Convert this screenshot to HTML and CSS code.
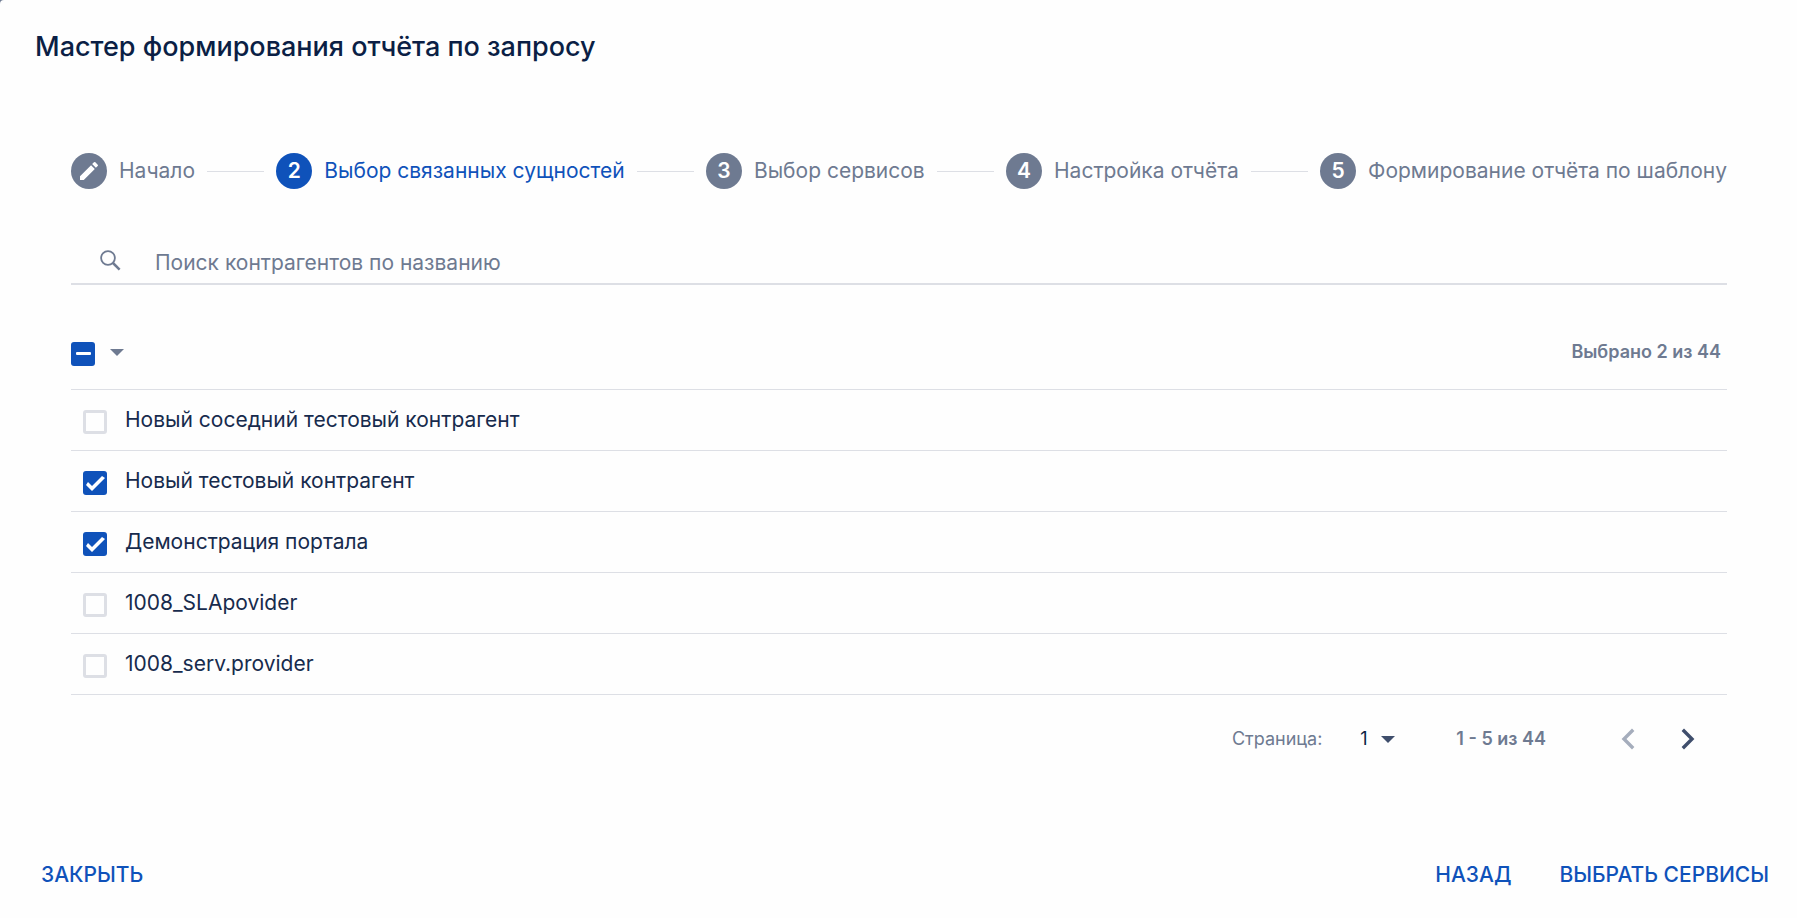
FILE: index.html
```html
<!DOCTYPE html>
<html lang="ru">
<head>
<meta charset="UTF-8">
<meta name="viewport" content="width=device-width, initial-scale=1.0">
<title>Мастер формирования отчёта по запросу</title>
<link rel="stylesheet" href="styles.css">
</head>
<body>

<div class="dialog">
    <h2 class="dialog-title">Мастер формирования отчёта по запросу</h2>

    <div class="dialog-content">
        <ol class="stepper">
            <li class="step">
                <span class="step-icon">
                    <svg viewBox="0 0 24 24" width="24" height="24" fill="currentColor"><path d="M3 17.25V21h3.75L17.81 9.94l-3.75-3.75L3 17.25zM20.71 7.04a1 1 0 0 0 0-1.41l-2.34-2.34a1 1 0 0 0-1.41 0l-1.83 1.83 3.75 3.75 1.83-1.83z"/></svg>
                </span>
                <span class="step-label">Начало</span>
            </li>
            <li class="step active">
                <span class="step-icon">2</span>
                <span class="step-label">Выбор связанных сущностей</span>
            </li>
            <li class="step">
                <span class="step-icon">3</span>
                <span class="step-label">Выбор сервисов</span>
            </li>
            <li class="step">
                <span class="step-icon">4</span>
                <span class="step-label">Настройка отчёта</span>
            </li>
            <li class="step">
                <span class="step-icon">5</span>
                <span class="step-label">Формирование отчёта по шаблону</span>
            </li>
        </ol>

        <div class="search">
            <svg class="search-icon" viewBox="0 0 21 21" width="21" height="21" fill="none" stroke="currentColor"><circle cx="8" cy="8" r="6.9" stroke-width="1.8"/><path d="M13 13l6.6 6.6" stroke-width="2.5"/></svg>
            <input type="text" class="search-input" placeholder="Поиск контрагентов по названию" aria-label="Поиск контрагентов по названию">
        </div>

        <div class="toolbar">
            <input type="checkbox" class="checkbox" id="selectAll" aria-label="Выбрать все">
            <button type="button" class="menu-btn" aria-label="Варианты выбора">
                <svg viewBox="0 0 14 7" width="14" height="7" fill="currentColor"><path d="M0 0h14L7 7z"/></svg>
            </button>
            <span class="selected-count">Выбрано 2 из 44</span>
        </div>

        <table class="list">
            <tr>
                <td class="check-cell"><input type="checkbox" class="checkbox" id="row1"></td>
                <td><label for="row1">Новый соседний тестовый контрагент</label></td>
            </tr>
            <tr>
                <td class="check-cell"><input type="checkbox" class="checkbox" id="row2" checked></td>
                <td><label for="row2">Новый тестовый контрагент</label></td>
            </tr>
            <tr>
                <td class="check-cell"><input type="checkbox" class="checkbox" id="row3" checked></td>
                <td><label for="row3">Демонстрация портала</label></td>
            </tr>
            <tr>
                <td class="check-cell"><input type="checkbox" class="checkbox" id="row4"></td>
                <td><label for="row4">1008_SLApovider</label></td>
            </tr>
            <tr>
                <td class="check-cell"><input type="checkbox" class="checkbox" id="row5"></td>
                <td><label for="row5">1008_serv.provider</label></td>
            </tr>
        </table>

        <div class="pagination">
            <label for="page">Страница:</label>
            <div class="page-select">
                <select id="page">
                    <option>1</option>
                    <option>2</option>
                    <option>3</option>
                </select>
                <svg viewBox="0 0 14 7" width="14" height="7" fill="currentColor"><path d="M0 0h14L7 7z"/></svg>
            </div>
            <span class="page-range">1 - 5 из 44</span>
            <div class="page-nav">
                <button type="button" class="nav-btn" disabled aria-label="Предыдущая страница">
                    <svg viewBox="0 0 14 22" width="14" height="22" fill="none" stroke="currentColor" stroke-width="3.4"><path d="M12.2 1.8L3 11l9.2 9.2"/></svg>
                </button>
                <button type="button" class="nav-btn" aria-label="Следующая страница">
                    <svg viewBox="0 0 14 22" width="14" height="22" fill="none" stroke="currentColor" stroke-width="3.4"><path d="M1.8 1.8L11 11l-9.2 9.2"/></svg>
                </button>
            </div>
        </div>
    </div>

    <div class="dialog-actions">
        <button type="button" class="btn">ЗАКРЫТЬ</button>
        <div class="actions-right">
            <button type="button" class="btn">НАЗАД</button>
            <button type="button" class="btn">ВЫБРАТЬ СЕРВИСЫ</button>
        </div>
    </div>
</div>

<script>
    document.getElementById("selectAll").indeterminate = true;
</script>

</body>
</html>
```
FILE: styles.css
```css
* {
    box-sizing: border-box;
}
body {
    margin: 0;
    background-color: #6e7a91;
    color: #0b1f45;
    font-family: Inter, "Liberation Sans", sans-serif;
    font-size: 21px;
    line-height: 30px;
}
button, input, select {
    font: inherit;
}
button {
    padding: 0;
    border: 0;
    background: none;
    cursor: pointer;
}
svg {
    display: block;
}
.dialog {
    display: flex;
    flex-direction: column;
    min-height: 100vh;
    background-color: #fefefe;
    border-top-left-radius: 4px;
}
.dialog-title {
    margin: 0;
    padding: 29px 35px 27px;
    font-size: 27px;
    line-height: 36px;
    font-weight: 500;
}
.dialog-content {
    flex: 1;
    padding: 61px 70px 0 71px;
}

/* stepper */
.stepper {
    display: flex;
    margin: 0;
    padding: 0;
    list-style: none;
    color: #6e7a91;
}
.step {
    display: flex;
    align-items: center;
    gap: 12px;
}
.step:not(:last-child) {
    flex: 1 1 auto;
}
.step:not(:last-child)::after {
    content: "";
    flex: 1;
    height: 1px;
    margin-right: 12px;
    background-color: #dddfe5;
}
.step-label {
    white-space: nowrap;
}
.step-icon {
    display: flex;
    align-items: center;
    justify-content: center;
    width: 36px;
    height: 36px;
    border-radius: 50%;
    background-color: #6e7a91;
    color: #fff;
    font-weight: 600;
}
.active {
    color: #0f52ba;
}
.active .step-icon {
    background-color: #0f52ba;
}

/* search */
.search {
    display: flex;
    align-items: center;
    margin-top: 52px;
    padding: 0 29px;
    border-bottom: 2px solid #dddfe5;
    color: #6e7a91;
}
.search-icon {
    margin-bottom: 4px;
}
.search-input {
    flex: 1;
    height: 42px;
    padding: 0 0 0 34px;
    border: 0;
    outline: 0;
    background: none;
    color: #0b1f45;
}
.search-input::placeholder {
    color: #6e7a91;
    opacity: 1;
}

/* checkboxes */
.checkbox {
    appearance: none;
    display: block;
    width: 24px;
    height: 24px;
    margin: 0;
    border: 3px solid #dddfe5;
    border-radius: 3px;
}
.checkbox:checked, .checkbox:indeterminate {
    border: 0;
    background-color: #0f52ba;
}
.checkbox:checked::before {
    content: "";
    display: block;
    width: 24px;
    height: 24px;
    background-color: #fff;
    clip-path: polygon(3px 14px, 5px 11px, 9px 15px, 19px 5px, 22px 7px, 9px 20px);
}
.checkbox:indeterminate::before {
    content: "";
    display: block;
    width: 15px;
    height: 3px;
    margin: 10px 0 0 5px;
    border-radius: 1px;
    background-color: #fff;
}

/* list */
.toolbar {
    display: flex;
    align-items: center;
    margin-top: 34px;
    padding: 18px 6px 22px 0;
    color: #6e7a91;
    font-size: 18px;
    font-weight: 600;
}
.toolbar .checkbox {
    margin-top: 4px;
}
.menu-btn {
    margin-left: 15px;
    color: #6e7a91;
}
.selected-count {
    margin-left: auto;
}
.list {
    width: 100%;
    border-collapse: collapse;
    border-top: 1px solid #dddfe5;
}
.list td {
    height: 61px;
    padding: 0;
    border-bottom: 1px solid #dddfe5;
    color: #172b4d;
}
.list .check-cell {
    width: 54px;
    padding: 4px 0 0 12px;
}

/* pagination */
.pagination {
    display: flex;
    align-items: center;
    justify-content: flex-end;
    margin-top: 22px;
    padding-right: 21px;
    color: #6e7a91;
    font-size: 18px;
}
.page-select {
    position: relative;
    margin-left: 38px;
    color: #3f4e6c;
}
.page-select select {
    appearance: none;
    display: block;
    width: 36px;
    height: 44px;
    padding: 0;
    border: 0;
    background: none;
    color: #0b1f45;
}
.page-select svg {
    position: absolute;
    top: 19px;
    right: 1px;
    pointer-events: none;
}
.page-range {
    margin-left: 60px;
    font-weight: 600;
}
.page-nav {
    display: flex;
    gap: 24px;
    margin-left: 64px;
}
.nav-btn {
    display: flex;
    align-items: center;
    justify-content: center;
    width: 36px;
    height: 36px;
    color: #3f4e6c;
}
.nav-btn:disabled {
    color: #a5adbc;
    cursor: default;
}

/* actions */
.dialog-actions {
    display: flex;
    justify-content: space-between;
    padding: 16px 16px 16px 29px;
}
.actions-right {
    display: flex;
    gap: 24px;
}
.btn {
    height: 54px;
    padding: 0 12px;
    color: #0f52ba;
    font-weight: 500;
}
```
